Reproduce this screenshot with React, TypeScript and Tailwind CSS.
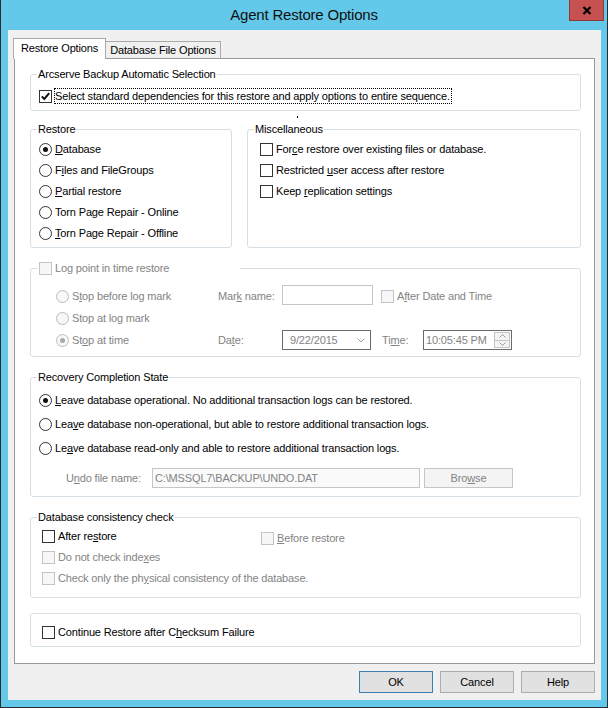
import React from 'react';

const dis = 'text-[#838383]';

function U({ children }: { children: React.ReactNode }) {
  return <span className="underline decoration-1 underline-offset-[1px]">{children}</span>;
}

function Check({ checked = false, disabled = false }: { checked?: boolean; disabled?: boolean }) {
  return (
    <span
      className={`flex h-[13px] w-[13px] shrink-0 items-center justify-center border ${
        disabled ? 'border-[#c4c4c4] bg-[#f7f7f7]' : 'border-[#333333] bg-white'
      }`}
    >
      {checked && (
        <svg width="11" height="11" viewBox="0 0 11 11">
          <path d="M1.8 5.4 L4.3 8 L9.2 2.2" fill="none" stroke="#111" strokeWidth="2" />
        </svg>
      )}
    </span>
  );
}

function Radio({ checked = false, disabled = false }: { checked?: boolean; disabled?: boolean }) {
  return (
    <span
      className={`flex h-[13px] w-[13px] shrink-0 items-center justify-center rounded-full border ${
        disabled ? 'border-[#bcbcbc] bg-[#f7f7f7]' : 'border-[#333333] bg-white'
      }`}
    >
      {checked && (
        <span className={`h-[5px] w-[5px] rounded-full ${disabled ? 'bg-[#a8a8a8]' : 'bg-[#111]'}`} />
      )}
    </span>
  );
}

function Group({
  title,
  className = '',
  children,
}: {
  title: React.ReactNode;
  className?: string;
  children: React.ReactNode;
}) {
  return (
    <fieldset className={`rounded-[3px] border border-[#d5dfe5] ${className}`}>
      <legend className="ml-[6px] px-[1px] leading-[13px]">{title}</legend>
      {children}
    </fieldset>
  );
}

function Row({ h = 'h-[21px]', children }: { h?: string; children: React.ReactNode }) {
  return <div className={`flex ${h} items-center gap-[3px]`}>{children}</div>;
}

function Button({ label, primary = false }: { label: React.ReactNode; primary?: boolean }) {
  return (
    <div
      className={`flex h-[22px] w-[74px] items-center justify-center border bg-[#e1e1e1] ${
        primary ? 'border-[#3c7fb1]' : 'border-[#adadad]'
      }`}
    >
      {label}
    </div>
  );
}

export default function App() {
  return (
    <div className="flex h-[708px] w-[608px] flex-col border-x border-b border-[#2d2d2d] bg-[#63c8e9] font-['Liberation_Sans',Arial,sans-serif] text-[11px] tracking-[-0.15px] text-black">
      {/* title bar */}
      <div className="relative flex h-[30px] shrink-0 items-center justify-center">
        <span className="text-[15px] tracking-[-0.2px] text-[#111]">Agent Restore Options</span>
        <div className="absolute right-[3px] top-0 flex h-[21px] w-[35px] items-center justify-center border border-t-0 border-[#8c3a3a] bg-[#c75050]">
          <svg width="10" height="9" viewBox="0 0 10 9">
            <path d="M1.5 1 L8.5 8 M8.5 1 L1.5 8" stroke="#000" strokeWidth="2.2" />
          </svg>
        </div>
      </div>

      <div className="flex flex-1 pl-[7px] pr-[6px] pb-[7px]">
        {/* client */}
        <div className="flex w-[593px] flex-col bg-[#f0f0f0] pt-[8px]">
          {/* tabs */}
          <div className="relative z-10 flex h-[20px] items-end pl-[5px]">
            <div className="-mb-px flex h-[21px] w-[93px] items-center justify-center border-x border-t border-[#a9a9a9] bg-white pb-[1px]">
              Restore Options
            </div>
            <div className="flex h-[17px] w-[115px] items-center justify-center border-r border-t border-[#a9a9a9] bg-[#f0f0f0] pt-[1px]">
              Database File Options
            </div>
          </div>

          {/* panel */}
          <div className="mx-[6px] flex h-[606px] flex-col border border-[#989898] bg-white pl-[15px] pr-[13px] pt-[9px]">
            <Group title="Arcserve Backup Automatic Selection">
              <div className="mb-[6px] mt-[7px] flex h-[16px] items-center pl-[8px]">
                <Check checked />
                <span className="ml-[2px] flex h-[16px] items-center border border-dotted border-black pr-[1px]">
                  Select standard dependencies for this restore and apply options to entire sequence.
                </span>
              </div>
            </Group>

            <div className="h-[12px] pl-[267px] pt-[5px]">
              <div className="h-[2px] w-[1px] bg-black" />
            </div>

            <div className="flex gap-[15px]">
              <Group title="Restore" className="w-[202px]">
                <div className="pb-[3px] pl-[8px] pt-[3px]">
                  <Row>
                    <Radio checked />
                    <span>
                      <U>D</U>atabase
                    </span>
                  </Row>
                  <Row>
                    <Radio />
                    <span>
                      F<U>i</U>les and FileGroups
                    </span>
                  </Row>
                  <Row>
                    <Radio />
                    <span>
                      <U>P</U>artial restore
                    </span>
                  </Row>
                  <Row>
                    <Radio />
                    <span>
                      Torn Pa<U>g</U>e Repair - Online
                    </span>
                  </Row>
                  <Row>
                    <Radio />
                    <span>
                      <U>T</U>orn Page Repair - Offline
                    </span>
                  </Row>
                </div>
              </Group>
              <Group title="Miscellaneous" className="flex-1">
                <div className="pl-[12px] pt-[3px]">
                  <Row>
                    <Check />
                    <span>
                      For<U>c</U>e restore over existing files or database.
                    </span>
                  </Row>
                  <Row>
                    <Check />
                    <span>
                      Restricted <U>u</U>ser access after restore
                    </span>
                  </Row>
                  <Row>
                    <Check />
                    <span>
                      Keep <U>r</U>eplication settings
                    </span>
                  </Row>
                </div>
              </Group>
            </div>

            {/* log point in time */}
            <fieldset className="mt-[14px] rounded-[3px] border border-[#d5dfe5]">
              <legend className="ml-[6px] w-[203px] px-[2px] leading-[13px]">
                <span className="flex h-[13px] items-center gap-[3px]">
                  <Check disabled />
                  <span className={dis}>Log point in time restore</span>
                </span>
              </legend>
              <div className={`pb-[5px] pl-[25px] pt-[10px] ${dis}`}>
                <div className="flex h-[22px] items-center">
                  <div className="flex w-[162px] items-center gap-[3px]">
                    <Radio disabled />
                    <span>
                      S<U>t</U>op before log mark
                    </span>
                  </div>
                  <span className="w-[64px]">
                    Mar<U>k</U> name:
                  </span>
                  <div className="mb-[3px] h-[20px] w-[91px] border border-[#c6c6c6] bg-white" />
                  <div className="ml-[8px] flex items-center gap-[3px]">
                    <Check disabled />
                    <span>
                      A<U>f</U>ter Date and Time
                    </span>
                  </div>
                </div>
                <div className="flex h-[22px] items-center gap-[3px]">
                  <Radio disabled />
                  <span>
                    Stop at lo<U>g</U> mark
                  </span>
                </div>
                <div className="flex h-[22px] items-center">
                  <div className="flex w-[162px] items-center gap-[3px]">
                    <Radio checked disabled />
                    <span>
                      St<U>o</U>p at time
                    </span>
                  </div>
                  <span className="w-[64px]">
                    Da<U>t</U>e:
                  </span>
                  <div className="flex h-[20px] w-[89px] items-center justify-between border border-[#6a6a6a] bg-white pl-[7px] pr-[5px]">
                    <span>9/22/2015</span>
                    <svg width="8" height="5" viewBox="0 0 8 5">
                      <path d="M0.5 0.5 L4 4 L7.5 0.5" fill="none" stroke="#a0a0a0" strokeWidth="1" />
                    </svg>
                  </div>
                  <span className="ml-[11px] w-[41px]">
                    Ti<U>m</U>e:
                  </span>
                  <div className="flex h-[20px] w-[89px] items-center justify-between border border-[#6a6a6a] bg-white pl-[2px] pr-[1px]">
                    <span>10:05:45 PM</span>
                    <div className="flex h-[16px] w-[16px] flex-col border border-[#c4c4c4] bg-[#f4f4f4]">
                      <div className="flex flex-1 items-center justify-center border-b border-[#c4c4c4]">
                        <svg width="7" height="4" viewBox="0 0 7 4">
                          <path d="M0.5 3.5 L3.5 0.5 L6.5 3.5" fill="none" stroke="#9a9a9a" strokeWidth="1" />
                        </svg>
                      </div>
                      <div className="flex flex-1 items-center justify-center">
                        <svg width="7" height="4" viewBox="0 0 7 4">
                          <path d="M0.5 0.5 L3.5 3.5 L6.5 0.5" fill="none" stroke="#9a9a9a" strokeWidth="1" />
                        </svg>
                      </div>
                    </div>
                  </div>
                </div>
              </div>
            </fieldset>

            <Group title="Recovery Completion State" className="mt-[14px]">
              <div className="pb-[8px] pl-[8px] pt-[4px]">
                <Row h="h-[24px]">
                  <Radio checked />
                  <span>
                    <U>L</U>eave database operational. No additional transaction logs can be restored.
                  </span>
                </Row>
                <Row h="h-[24px]">
                  <Radio />
                  <span>
                    Lea<U>v</U>e database non-operational, but able to restore additional transaction logs.
                  </span>
                </Row>
                <Row h="h-[24px]">
                  <Radio />
                  <span>
                    Le<U>a</U>ve database read-only and able to restore additional transaction logs.
                  </span>
                </Row>
                <div className={`mt-[8px] flex h-[20px] items-center pl-[27px] ${dis}`}>
                  <span className="w-[86px]">
                    U<U>n</U>do file name:
                  </span>
                  <div className="flex h-[20px] w-[268px] items-center border border-[#c6c6c6] bg-[#fafafa] pl-[2px]">
                    C:\MSSQL7\BACKUP\UNDO.DAT
                  </div>
                  <div className="ml-[4px] flex h-[20px] w-[89px] items-center justify-center border border-[#c6c6c6] bg-[#f4f4f4]">
                    <span>
                      Bro<U>w</U>se
                    </span>
                  </div>
                </div>
              </div>
            </Group>

            <Group title="Database consistency check" className="mt-[14px]">
              <div className="pb-[8px] pl-[11px] pt-[2px]">
                <div className="flex h-[21px] items-center">
                  <div className="flex w-[219px] items-center gap-[3px]">
                    <Check />
                    <span>
                      After re<U>s</U>tore
                    </span>
                  </div>
                  <div className={`flex translate-y-[2px] items-center gap-[3px] ${dis}`}>
                    <Check disabled />
                    <span>
                      <U>B</U>efore restore
                    </span>
                  </div>
                </div>
                <div className={dis}>
                  <Row>
                    <Check disabled />
                    <span>
                      Do not check inde<U>x</U>es
                    </span>
                  </Row>
                  <Row>
                    <Check disabled />
                    <span>
                      Check only the ph<U>y</U>sical consistency of the database.
                    </span>
                  </Row>
                </div>
              </div>
            </Group>

            <div className="mt-[15px] rounded-[3px] border border-[#d5dfe5] pb-[3px] pl-[11px] pt-[8px]">
              <Row>
                <Check />
                <span>
                  Continue Restore after C<U>h</U>ecksum Failure
                </span>
              </Row>
            </div>
          </div>

          {/* buttons */}
          <div className="mr-[6px] mt-[7px] flex justify-end gap-[7px]">
            <Button label="OK" primary />
            <Button label="Cancel" />
            <Button label="Help" />
          </div>
        </div>
      </div>
    </div>
  );
}
